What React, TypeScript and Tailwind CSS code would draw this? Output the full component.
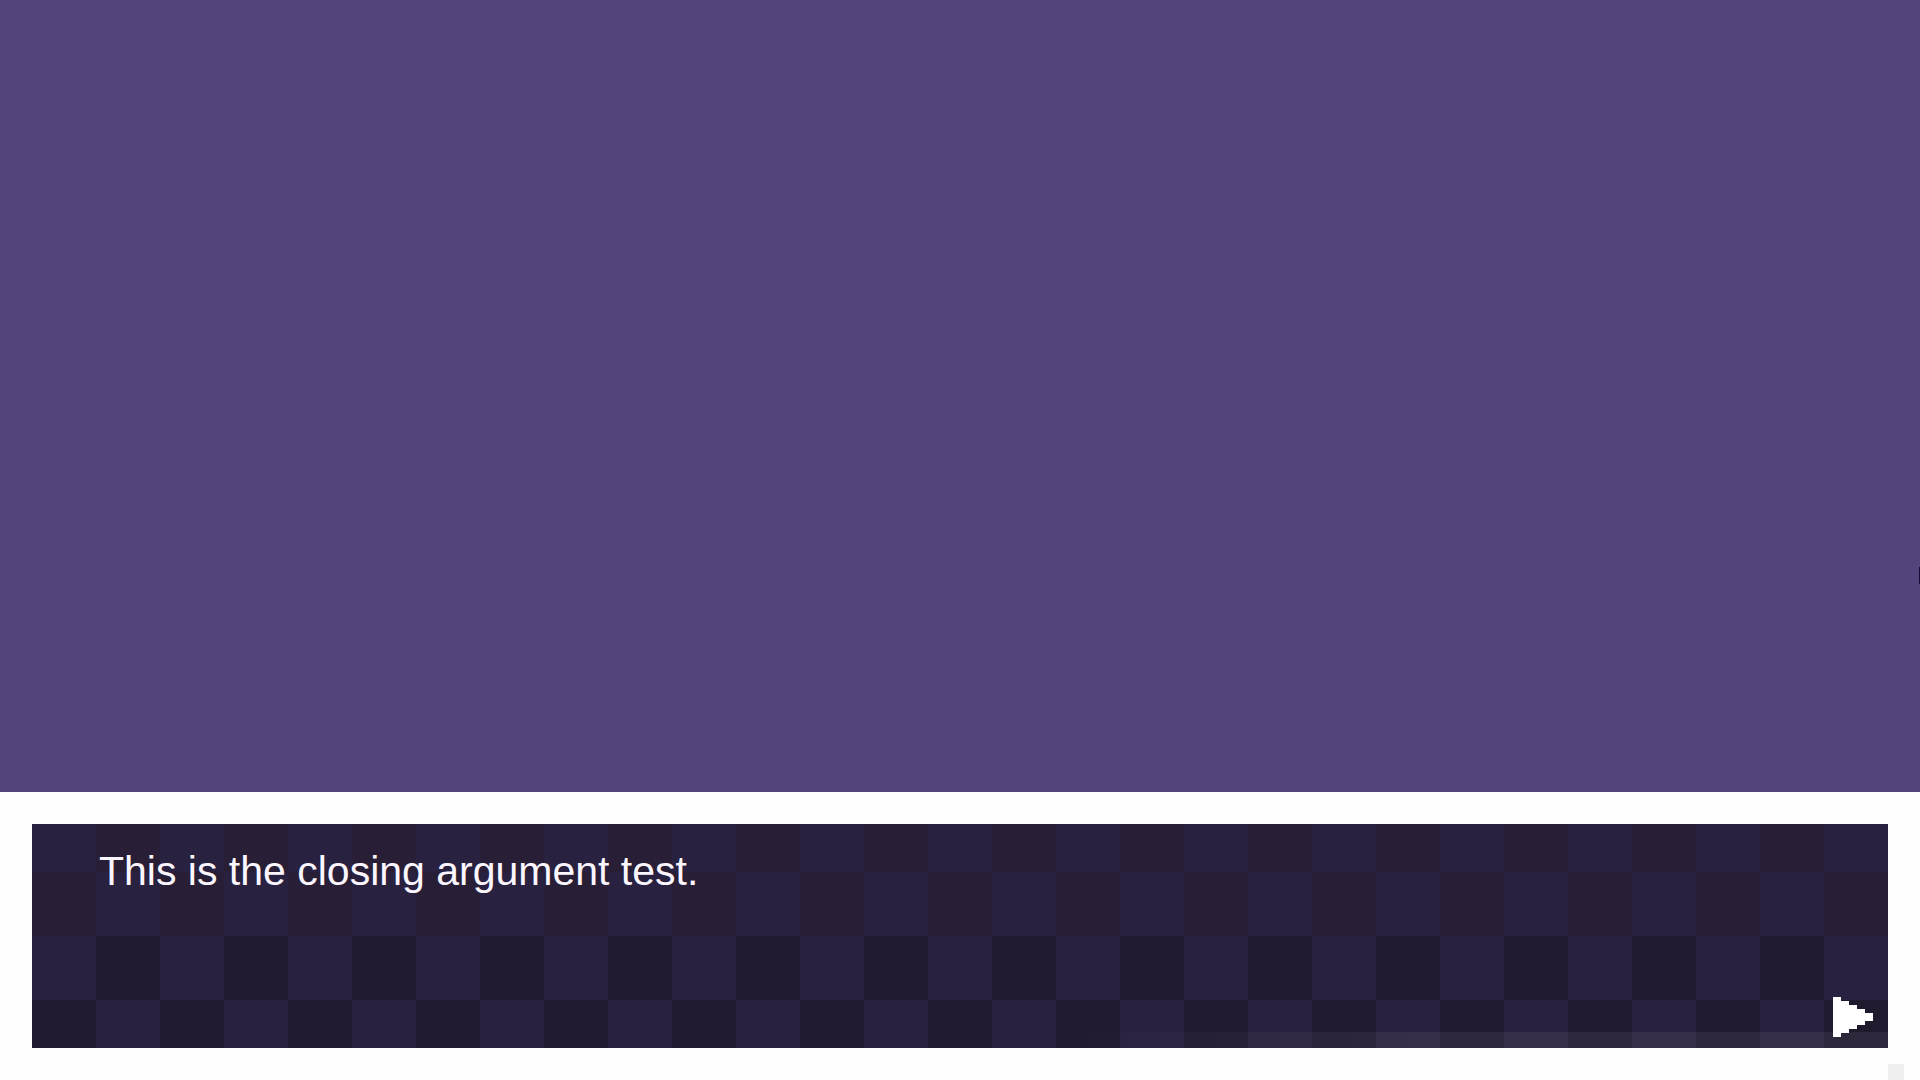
import { ReactElement } from "react";

function NextArrow(): ReactElement {
  return (
    <svg
      width={40}
      height={40}
      viewBox="0 0 10 10"
      fill="currentColor"
      shapeRendering="crispEdges"
      aria-hidden="true"
    >
      <path d="M0 0H2V1H4V2H6V3H8V4H10V6H8V7H6V8H4V9H2V10H0Z" />
    </svg>
  );
}

function DialogueBox({ line }: { line: string }): ReactElement {
  return (
    <section className="relative bg-[#fefefe] p-8">
      <div className="relative flex h-56 justify-between bg-[repeating-conic-gradient(#28213f_0_25%,transparent_0_50%),linear-gradient(#281f36_112px,#201a2f_112px)] bg-[length:128px_128px,100%_100%] bg-[position:0_48px,0_0] pt-6 pr-[15px] pb-[11px] pl-[67px]">
        <div className="absolute inset-x-0 bottom-0 h-4 bg-[linear-gradient(to_right,transparent_55%,#ffffff10_75%)]" />
        <p className="font-['Liberation_Sans',Arial,sans-serif] text-[41px] leading-[46px] text-[#fcf6ff]">
          {line}
        </p>
        <button type="button" aria-label="Next" className="relative self-end text-white">
          <NextArrow />
        </button>
      </div>
      <div className="absolute right-4 bottom-0 size-4 bg-[#efefef]" />
    </section>
  );
}

export default function App(): ReactElement {
  return (
    <div className="flex min-h-screen w-full flex-col">
      <main className="relative flex-1 bg-[#54447c]">
        <div className="absolute top-[567px] right-0 h-[17px] w-px bg-[#1c0838]" />
      </main>
      <DialogueBox line="This is the closing argument test." />
    </div>
  );
}
